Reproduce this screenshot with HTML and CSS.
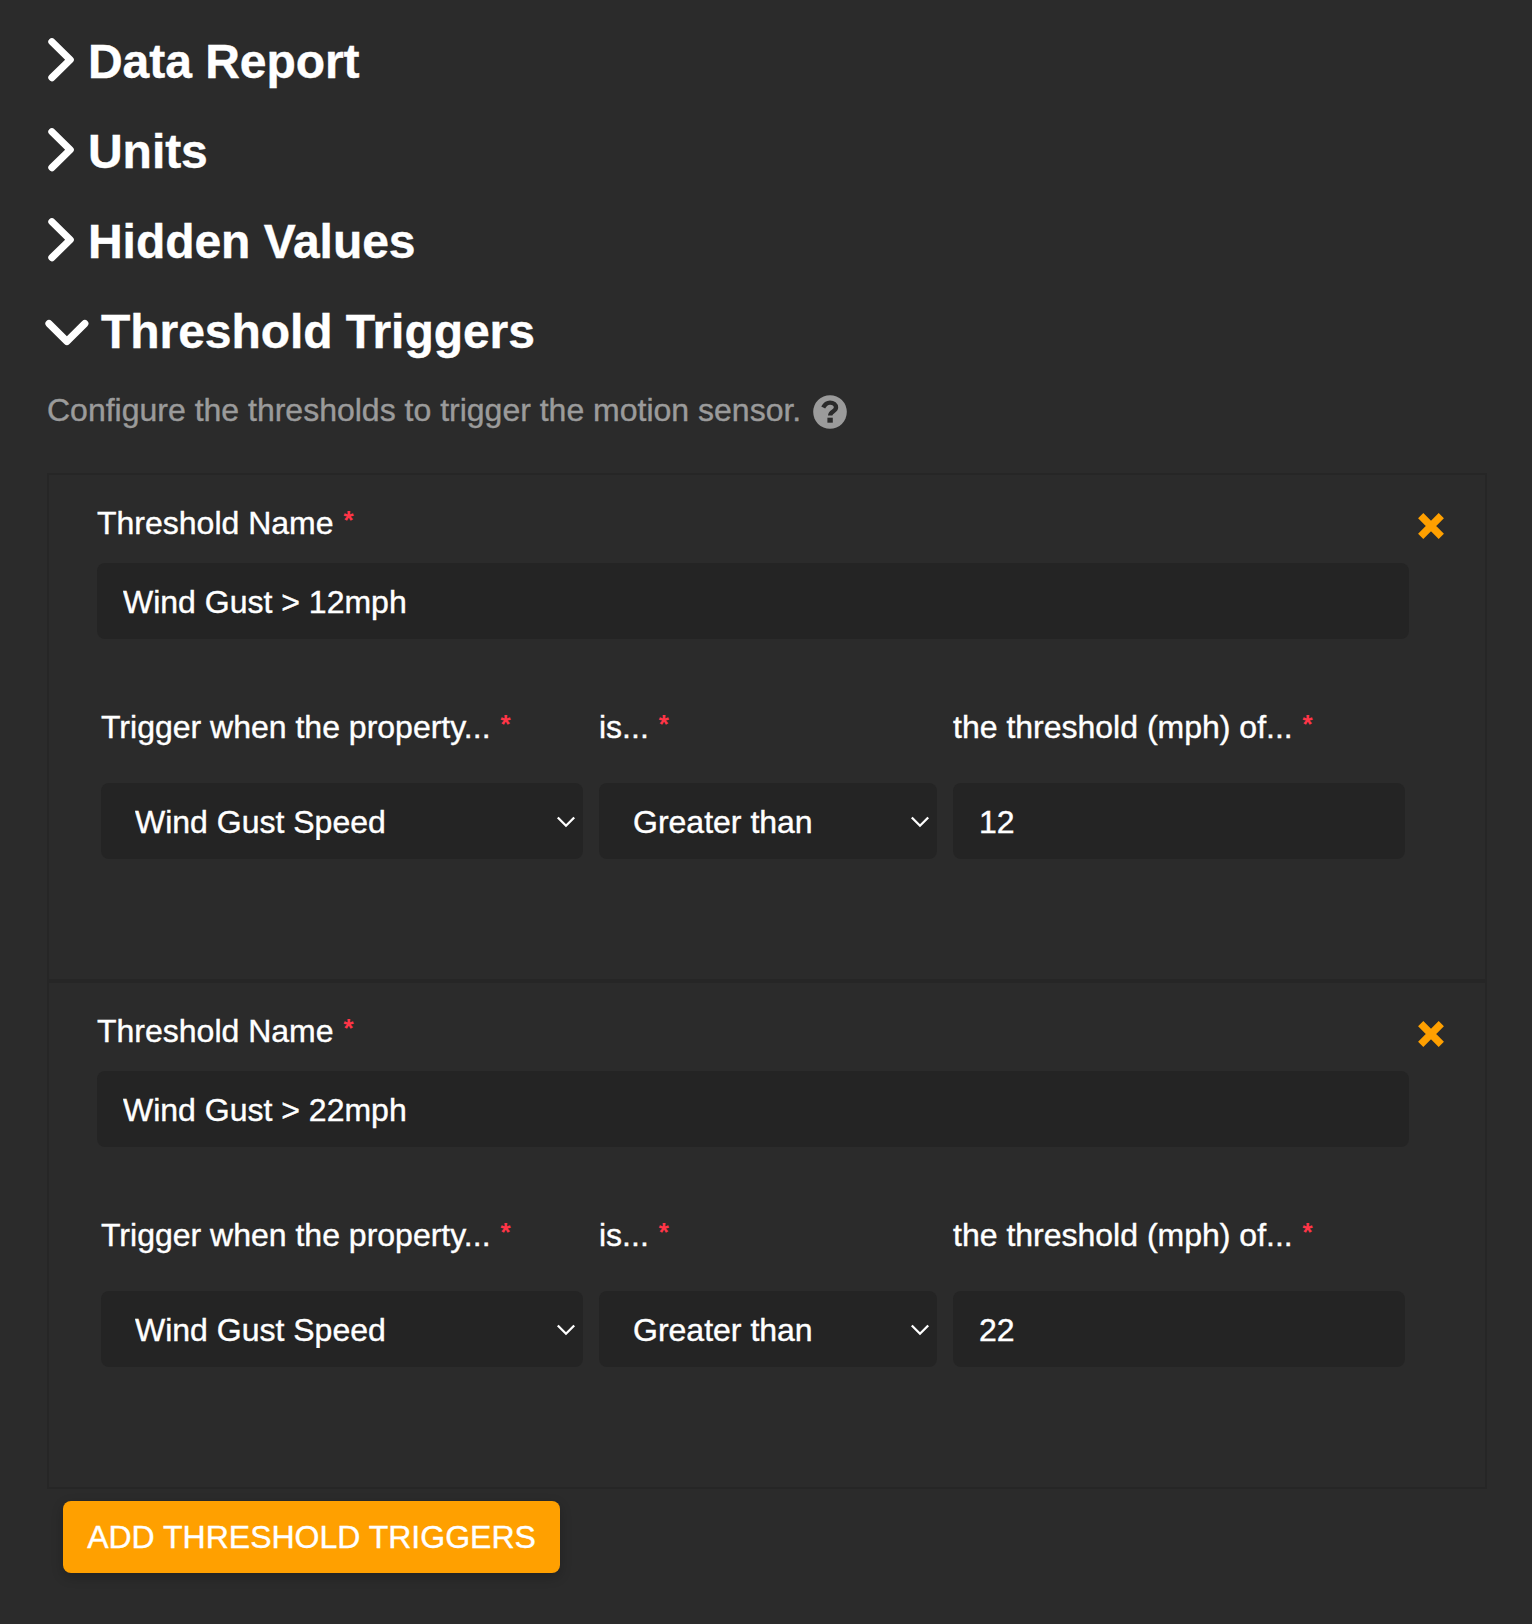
FILE: index.html
```html
<!DOCTYPE html>
<html lang="en">
<head>
<meta charset="utf-8">
<title>Threshold Triggers</title>
<link rel="stylesheet" href="styles.css">
</head>
<body>
<main class="page">
  <h2 class="section"><svg class="chevron" width="41" height="90" viewBox="0 0 41 90"><path d="M4.900 24.800 23.200 42.700 4.900 60.600"/></svg>Data Report</h2>
  <h2 class="section"><svg class="chevron" width="41" height="90" viewBox="0 0 41 90"><path d="M4.900 24.800 23.200 42.700 4.900 60.600"/></svg>Units</h2>
  <h2 class="section"><svg class="chevron" width="41" height="90" viewBox="0 0 41 90"><path d="M4.900 24.800 23.200 42.700 4.900 60.600"/></svg>Hidden Values</h2>
  <h2 class="section"><svg class="chevron" width="54" height="90" viewBox="0 0 54 90"><path d="M2 36.600 19.900 54.400 37.800 36.600"/></svg>Threshold Triggers</h2>

  <p class="description">Configure the thresholds to trigger the motion sensor.
    <svg class="help" width="34" height="34" viewBox="0 0 34 34"><circle cx="17" cy="17" r="16.800"/><path class="help-hook" d="M10.200 12.600C12 9 14 7.600 17 7.600c3.400 0 6 1.900 6 5 0 3.800-5.800 4-5.800 7.800"/><path class="help-dot" d="M14.400 22.700h5.400v5h-5.400z"/></svg>
  </p>

  <section class="card">
    <div class="card-main">
      <label class="label" for="name1">Threshold Name <span class="required">*</span></label>
      <input class="field name" id="name1" value="Wind Gust &gt; 12mph">
      <div class="conditions">
        <div class="condition"><label class="label" for="prop1">Trigger when the property... <span class="required">*</span></label>
          <div class="select"><select class="field" id="prop1"><option>Wind Gust Speed</option></select><svg class="caret" width="20" height="12" viewBox="0 0 20 12"><path d="M1.800 1.500 10 9.700 18.200 1.500"/></svg></div></div>
        <div class="condition"><label class="label" for="op1">is... <span class="required">*</span></label>
          <div class="select"><select class="field" id="op1"><option>Greater than</option></select><svg class="caret" width="20" height="12" viewBox="0 0 20 12"><path d="M1.800 1.500 10 9.700 18.200 1.500"/></svg></div></div>
        <div class="condition"><label class="label" for="limit1">the threshold (mph) of... <span class="required">*</span></label>
          <input class="field" id="limit1" value="12"></div>
      </div>
    </div>
    <button class="remove" aria-label="Remove"><svg width="26" height="26" viewBox="0 0 26 26"><path d="M2.700 2.700 23.300 23.300M23.300 2.700 2.700 23.300"/></svg></button>
  </section>

  <section class="card">
    <div class="card-main">
      <label class="label" for="name2">Threshold Name <span class="required">*</span></label>
      <input class="field name" id="name2" value="Wind Gust &gt; 22mph">
      <div class="conditions">
        <div class="condition"><label class="label" for="prop2">Trigger when the property... <span class="required">*</span></label>
          <div class="select"><select class="field" id="prop2"><option>Wind Gust Speed</option></select><svg class="caret" width="20" height="12" viewBox="0 0 20 12"><path d="M1.800 1.500 10 9.700 18.200 1.500"/></svg></div></div>
        <div class="condition"><label class="label" for="op2">is... <span class="required">*</span></label>
          <div class="select"><select class="field" id="op2"><option>Greater than</option></select><svg class="caret" width="20" height="12" viewBox="0 0 20 12"><path d="M1.800 1.500 10 9.700 18.200 1.500"/></svg></div></div>
        <div class="condition"><label class="label" for="limit2">the threshold (mph) of... <span class="required">*</span></label>
          <input class="field" id="limit2" value="22"></div>
      </div>
    </div>
    <button class="remove" aria-label="Remove"><svg width="26" height="26" viewBox="0 0 26 26"><path d="M2.700 2.700 23.300 23.300M23.300 2.700 2.700 23.300"/></svg></button>
  </section>

  <button class="add">ADD THRESHOLD TRIGGERS</button>
</main>
</body>
</html>
```
FILE: styles.css
```css
* { box-sizing: border-box; }
body {
  margin: 0;
  background: #2b2b2b;
  color: #fff;
  font-family: "Liberation Sans", Arial, sans-serif;
  font-size: 32px;
  line-height: 36px;
  -webkit-text-stroke: .4px;
}
.page { min-height: 1624px; padding: 17px 45px 0 47px; }
.section {
  display: flex;
  height: 90px;
  margin: 0;
  font-size: 48px;
  font-weight: 700;
  line-height: 90px;
  letter-spacing: -.05px;
}
.chevron { flex: none; }
.chevron path {
  fill: none;
  stroke: #fff;
  stroke-width: 7.2;
  stroke-linecap: round;
  stroke-linejoin: round;
}
.chevron { overflow: visible; }
.description {
  display: flex;
  align-items: center;
  gap: 12px;
  height: 36px;
  margin: 15px 0 45px;
  color: #9b9b9b;
}
.help { flex: none; margin-top: 4px; fill: #9b9b9b; }
.help-hook { fill: none; stroke: #2b2b2b; stroke-width: 4.4; }
.help-dot { fill: #2b2b2b; }
.card {
  display: flex;
  width: 1440px;
  height: 508px;
  padding: 30px 0 0 48px;
  border: 2px solid #262626;
}
.card-main { width: 1312px; }
.label { display: block; height: 36px; white-space: nowrap; }
.required {
  display: inline-block;
  margin-left: 1px;
  color: #ff3547;
  font-size: 26px;
  font-weight: 700;
  line-height: 26px;
  vertical-align: 5px;
  -webkit-text-stroke: 0;
}
.field {
  display: block;
  width: 100%;
  height: 76px;
  margin: 0;
  padding: 2px 26px 0;
  border: 0;
  border-radius: 8px;
  outline: 0;
  background: #242424;
  color: #fff;
  font: inherit;
  appearance: none;
}
.name { margin-top: 22px; }
.conditions {
  display: grid;
  grid-template-columns: 482px 338px 452px;
  gap: 16px;
  margin: 70px 4px 0;
}
.condition { display: grid; gap: 38px; }
.select { position: relative; }
.select .field { padding-left: 34px; }
.caret { position: absolute; top: 33px; right: 7px; }
.caret path { fill: none; stroke: #fff; stroke-width: 2.3; }
.remove {
  width: 26px;
  height: 26px;
  margin: 8px 0 0 9px;
  padding: 0;
  border: 0;
  background: none;
}
.remove svg { display: block; }
.remove path { stroke: #ffa000; stroke-width: 7.4; }
.add {
  display: block;
  width: 497px;
  height: 72px;
  margin: 12px 0 0 16px;
  padding: 0;
  border: 0;
  border-radius: 8px;
  background: #ffa000;
  box-shadow: 0 4px 12px rgba(0, 0, 0, .22);
  color: #fff;
  font: inherit;
  white-space: nowrap;
}
```
